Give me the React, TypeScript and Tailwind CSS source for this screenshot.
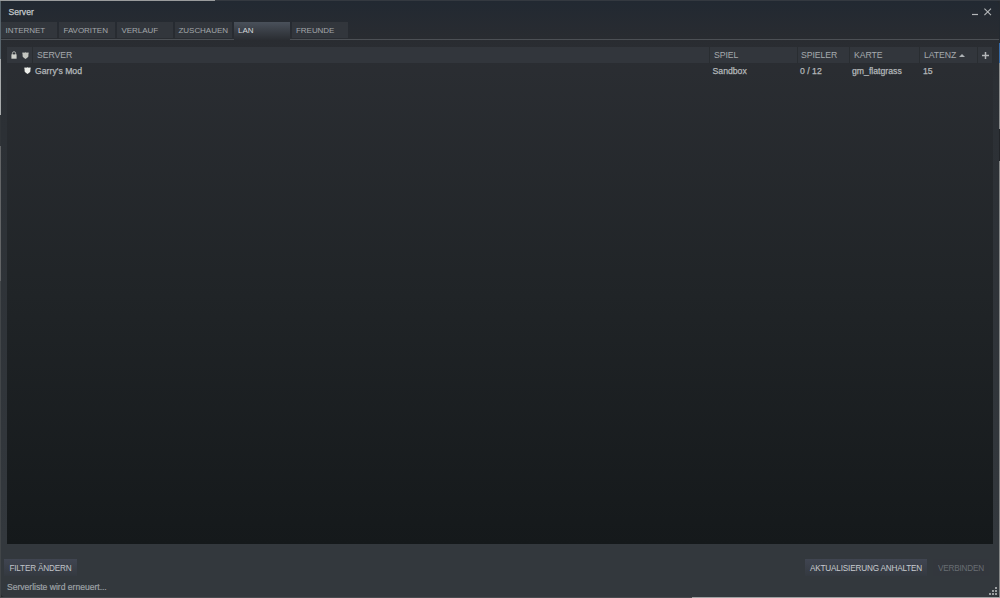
import type { ReactNode } from 'react'

type Tab = {
  label: string
  className: string
}

const tabs: Tab[] = [
  { label: 'INTERNET', className: 'w-14 pl-[4.5px]' },
  { label: 'FAVORITEN', className: 'w-14 pl-[4.5px]' },
  { label: 'VERLAUF', className: 'w-14 pl-[4.5px]' },
  { label: 'ZUSCHAUEN', className: 'w-[57px] pl-[3.5px]' },
  { label: 'LAN', className: 'w-14 pl-1' },
  { label: 'FREUNDE', className: 'w-14 pl-1' },
]

const activeTab = 'LAN'

const LockIcon = () => (
  <svg className="w-[6px] h-[8px]" viewBox="0 0 6 8">
    <path d="M1.4 4V2.3a1.6 1.6 0 0 1 3.2 0V4" fill="none" stroke="#a9aca8" strokeWidth="1" />
    <rect x="0.4" y="3.4" width="5.2" height="4.3" fill="#ced0ca" />
  </svg>
)

const ShieldIcon = ({ color }: { color: string }) => (
  <svg className="w-[7px] h-[7px]" viewBox="0 0 7 7">
    <path
      d="M0.7 0.2 2 0.8 3.5 0.3 5 0.8 6.3 0.2 6.7 1.4 6.4 2.6V4.6Q5.6 6 3.5 6.9 1.4 6 0.6 4.6V2.6L0.3 1.4Z"
      fill={color}
    />
  </svg>
)

const ResizeGrip = () => (
  <svg className="w-2 h-2" viewBox="0 0 8 8" fill="#9a9d9f" shapeRendering="crispEdges">
    <path d="M6 0h2v2H6zM3 3h2v2H3zM6 3h2v2H6zM0 6h2v2H0zM3 6h2v2H3zM6 6h2v2H6z" />
  </svg>
)

const HeaderCell = ({ className, children }: { className: string; children: ReactNode }) => (
  <div className={`flex items-center h-4 border-l border-[#292d31] ${className}`}>{children}</div>
)

const TitleBar = () => (
  <header className="flex justify-between h-[21px] pl-[7.5px] pr-[7px] pt-[5px]">
    <h1 className="h-3 leading-3 text-[8.6px] text-[#c6cacd] [-webkit-text-stroke:0.25px]">Server</h1>
    <div className="flex gap-[5px] pt-[2px]">
      <svg className="w-2 h-2" viewBox="0 0 8 8">
        <path d="M1 6.5h6" stroke="#b4b7b9" strokeWidth="1.2" />
      </svg>
      <svg className="w-2 h-2" viewBox="0 0 8 8">
        <path d="M0.4 0.6 7 7.2M7 0.6 0.4 7.2" stroke="#b4b7b9" strokeWidth="1.1" />
      </svg>
    </div>
  </header>
)

const TabBar = () => (
  <nav className="flex h-[18px] gap-[2px] bg-[linear-gradient(#4c5055,#4c5055)] bg-[length:100%_1px] bg-bottom bg-no-repeat">
    {tabs.map((tab) => (
      <button
        key={tab.label}
        className={`flex items-start justify-start pt-[5px] text-[8px] leading-2 tracking-[-0.04px] whitespace-nowrap ${tab.className} ${
          tab.label === activeTab
            ? 'h-[18px] bg-linear-to-b from-[#4a515b] to-[#2a2d32] text-[#d3d6da]'
            : 'h-4 bg-[#32363c] text-[#a2a6aa]'
        }`}
      >
        {tab.label}
      </button>
    ))}
  </nav>
)

const ServerList = () => (
  <main className="mt-[7px] mx-[6px] h-[497px] bg-linear-to-b from-[#2b2e33] via-[#202427] to-[#15191b] text-[8.7px] leading-[11px]">
    <div className="flex h-4 bg-[#32363c] text-[#a6aaae] tracking-[-0.08px]">
      <div className="flex items-center w-[25px] pl-[3.5px] gap-[5.5px]">
        <LockIcon />
        <ShieldIcon color="#c3c5c0" />
      </div>
      <HeaderCell className="w-[677px] pl-1 pt-px">SERVER</HeaderCell>
      <HeaderCell className="w-[88px] pl-1 pt-px">SPIEL</HeaderCell>
      <HeaderCell className="w-[52px] pl-[3px] pt-px">SPIELER</HeaderCell>
      <HeaderCell className="w-[70px] pl-1 pt-px">KARTE</HeaderCell>
      <HeaderCell className="w-[58px] pl-1 pt-px gap-[3px]">
        LATENZ
        <svg className="w-[6px] h-[3px]" viewBox="0 0 6 3">
          <path d="M0 3 3 0 6 3Z" fill="#aeb2b5" />
        </svg>
      </HeaderCell>
      <HeaderCell className="w-4 justify-center border-r">
        <svg className="w-[7px] h-[7px]" viewBox="0 0 7 7">
          <path d="M3.5 0v7M0 3.5h7" stroke="#b4b7b9" strokeWidth="1.5" />
        </svg>
      </HeaderCell>
    </div>
    <div className="flex items-center h-4 text-[#b4b8bb] [-webkit-text-stroke:0.25px]">
      <div className="w-[28px] pl-[17px] pb-px">
        <ShieldIcon color="#eceeea" />
      </div>
      <span className="w-[677.5px]">Garry's Mod</span>
      <span className="w-[87.5px]">Sandbox</span>
      <span className="w-[52px]">0 / 12</span>
      <span className="w-[71px]">gm_flatgrass</span>
      <span>15</span>
    </div>
  </main>
)

const Footer = () => (
  <footer className="relative flex flex-col pt-[15px] px-[3px] text-[8.2px] leading-[10px] tracking-[-0.18px]">
    <div className="flex h-[17px]">
      <button className="w-[73px] h-[17px] pt-[3px] bg-linear-to-b from-[#404551] to-[#343940] text-[#c0c4c9] whitespace-nowrap">
        FILTER ÄNDERN
      </button>
      <button className="ml-auto w-[122px] h-[17px] pt-[3px] bg-linear-to-b from-[#404551] to-[#343940] text-[#c8ccd0] whitespace-nowrap">
        AKTUALISIERUNG ANHALTEN
      </button>
      <button
        className="ml-[6px] mr-[7px] w-[56px] h-[17px] pt-[3px] bg-[#33373d] text-[#686d73] whitespace-nowrap"
        disabled
      >
        VERBINDEN
      </button>
    </div>
    <p className="mt-[5px] ml-[3px] h-3 leading-3 text-[8.6px] tracking-[-0.02px] text-[#9ea3a7] [-webkit-text-stroke:0.2px]">
      Serverliste wird erneuert...
    </p>
    <div className="absolute right-[2px] bottom-[-2px]">
      <ResizeGrip />
    </div>
  </footer>
)

export default function App() {
  return (
    <div className="flex flex-col w-[1000px] h-[598px] overflow-hidden bg-[#25282b] font-['Liberation_Sans',Arial,sans-serif]">
      <div className="flex h-px">
        <div className="w-[215px] bg-[#9a9c9d]" />
        <div className="flex-1 bg-[#343940]" />
      </div>
      <div className="flex h-[596px]">
        <div className="w-px bg-[linear-gradient(#59656d_0_58px,#a7aaab_58px_114px,#303438_114px_145px,#626466_145px_280px,#414548_280px)]" />
        <div className="w-[998px] rounded-[4px] bg-[linear-gradient(#222932,#292c31_38px,#2b2f34_80px,#33383d_540px,#33383d)]">
          <TitleBar />
          <TabBar />
          <ServerList />
          <Footer />
        </div>
        <div className="w-px bg-[linear-gradient(#242a31_0_42px,#366aa6_42px_62px,#8b8d8d_62px_128px,#222529_128px_160px,#858787_160px)]" />
      </div>
      <div className="flex h-px">
        <div className="w-[692px] bg-[#484b4f]" />
        <div className="flex-1 bg-[#a0a2a3]" />
      </div>
    </div>
  )
}
